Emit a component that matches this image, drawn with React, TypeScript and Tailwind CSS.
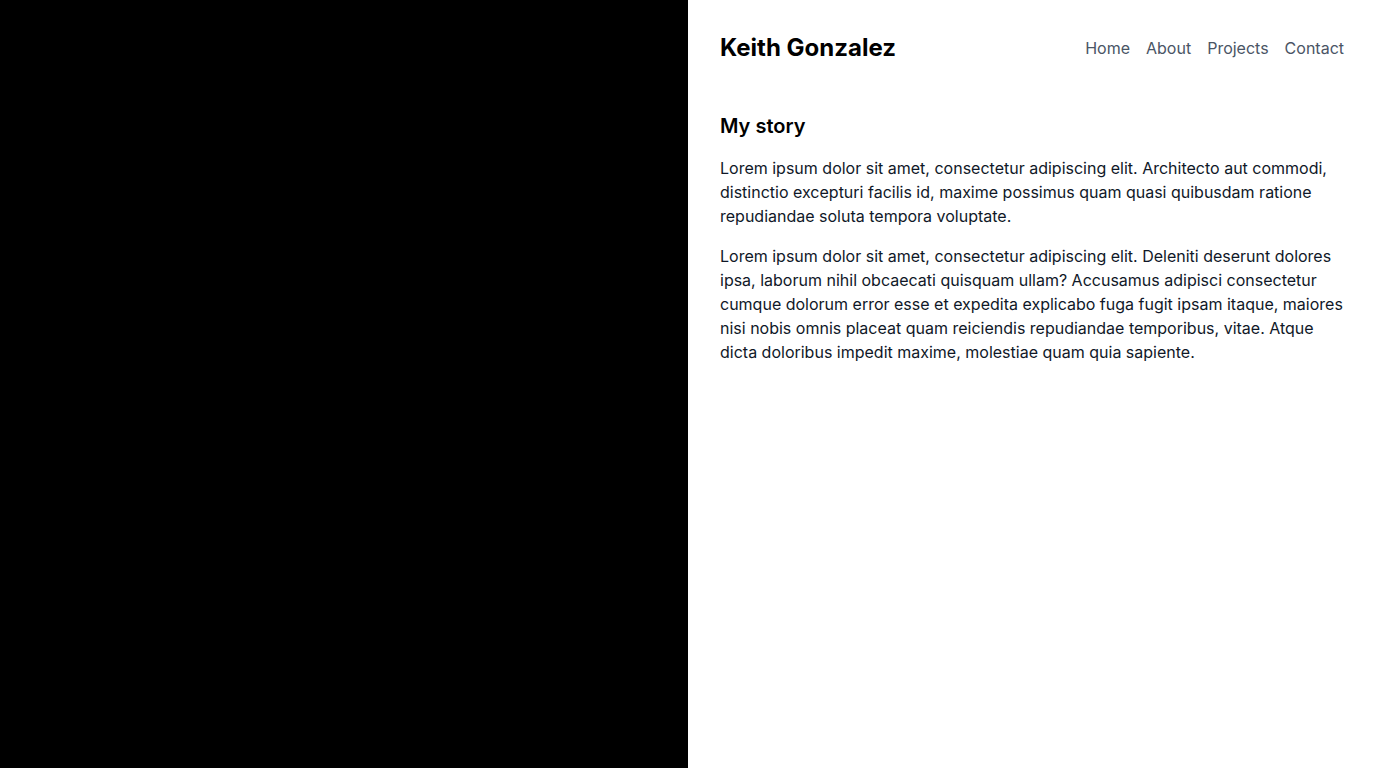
export default function App() {
  return (
    <div className="flex h-screen w-full font-['Inter',sans-serif]">
      <div className="w-1/2 bg-black" />
      <div className="w-1/2 bg-white p-8">
        <header className="flex items-center justify-between">
          <h1 className="text-2xl font-bold text-black">Keith Gonzalez</h1>
          <nav className="flex gap-4 text-gray-600">
            <a href="#">Home</a>
            <a href="#">About</a>
            <a href="#">Projects</a>
            <a href="#">Contact</a>
          </nav>
        </header>

        <section className="mt-12 text-gray-900">
          <h2 className="mb-4 text-xl font-semibold text-black">My story</h2>
          <p className="mb-4">
            Lorem ipsum dolor sit amet, consectetur adipiscing elit. Architecto aut commodi, distinctio excepturi facilis id,
            maxime possimus quam quasi quibusdam ratione repudiandae soluta tempora voluptate.
          </p>
          <p>
            Lorem ipsum dolor sit amet, consectetur adipiscing elit. Deleniti deserunt dolores ipsa, laborum nihil obcaecati
            quisquam ullam? Accusamus adipisci consectetur cumque dolorum error esse et expedita explicabo fuga fugit ipsam
            itaque, maiores nisi nobis omnis placeat quam reiciendis repudiandae temporibus, vitae. Atque dicta doloribus
            impedit maxime, molestiae quam quia sapiente.
          </p>
        </section>
      </div>
    </div>
  )
}
